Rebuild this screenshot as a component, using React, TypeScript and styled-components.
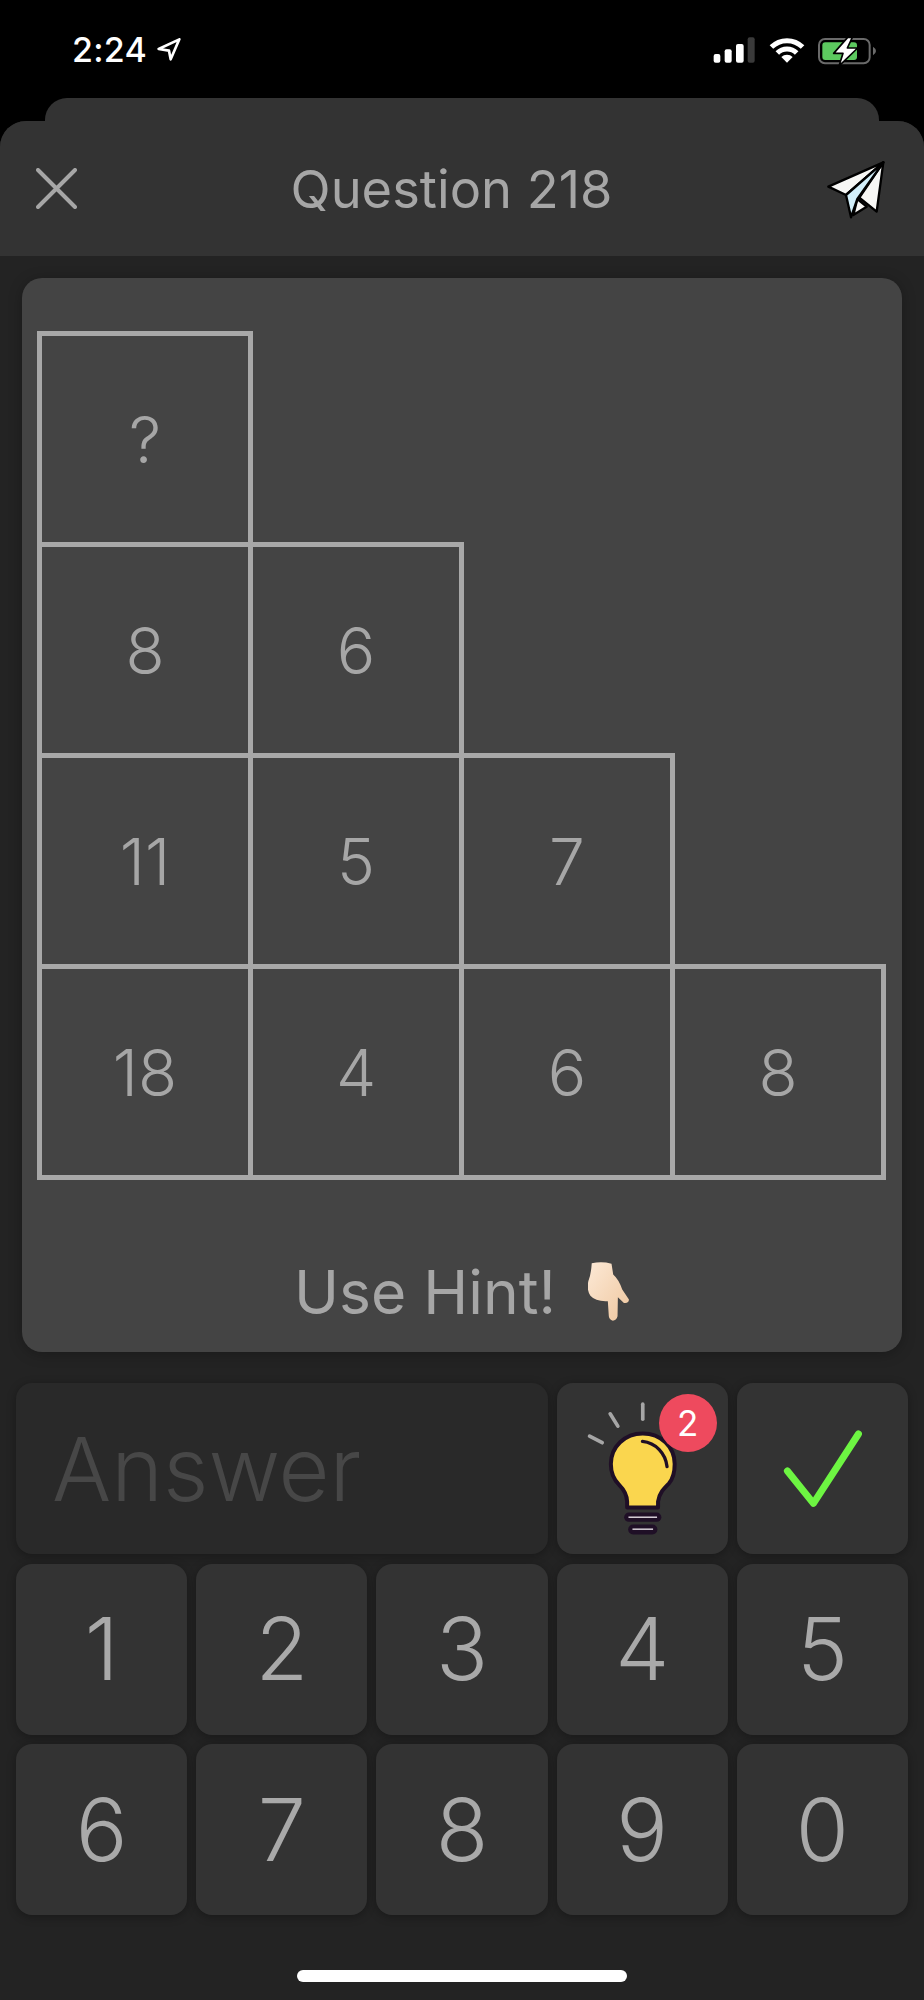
import React from "react";
import styled, { createGlobalStyle } from "styled-components";

const Global = createGlobalStyle`
  html, body { margin: 0; padding: 0; background: #000; }
  * { box-sizing: border-box; }
`;

const Page = styled.div`
  width: 924px;
  height: 2000px;
  background: #000;
  display: flex;
  flex-direction: column;
  font-family: Inter, "Liberation Sans", sans-serif;
  overflow: hidden;
`;

const StatusBar = styled.div`
  height: 98px;
  padding: 0 47px 0 72px;
  display: flex;
  align-items: flex-start;
  justify-content: space-between;
`;

const StatusLeft = styled.div`
  display: flex;
  align-items: center;
  gap: 10px;
  padding-top: 31px;
`;

const Clock = styled.span`
  color: #fff;
  font-size: 34px;
  line-height: 38px;
  font-weight: 500;
  letter-spacing: 0.3px;
`;

const StatusRight = styled.div`
  display: flex;
  align-items: center;
  gap: 10px;
  padding-top: 35px;
`;

const BackSheet = styled.div`
  height: 23px;
  margin: 0 45px;
  background: #333;
  border-radius: 22px 22px 0 0;
`;

const Sheet = styled.div`
  flex: 1;
  background: #232323;
  border-radius: 26px 26px 0 0;
  overflow: hidden;
  display: flex;
  flex-direction: column;
`;

const Header = styled.header`
  height: 135px;
  flex: none;
  background: #333;
  display: flex;
  align-items: center;
  justify-content: space-between;
  padding: 0 34px 0 36px;
`;

const Title = styled.h1`
  margin: 0 0 0 6px;
  color: #a6a6a6;
  font-size: 52.4px;
  font-weight: 400;
  line-height: 60px;
`;

const Card = styled.section`
  height: 1074px;
  margin: 22px 22px 0;
  padding: 53px 0 29px 15px;
  background: #444;
  border-radius: 20px;
  box-shadow: 0 2px 14px rgba(0, 0, 0, 0.25);
  display: flex;
  flex-direction: column;
`;

const Staircase = styled.div`
  display: flex;
  flex-direction: column;
`;

const StairRow = styled.div`
  display: flex;
  margin-bottom: -5px;
`;

const Cell = styled.div`
  width: 216px;
  height: 216px;
  margin-right: -5px;
  border: 5px solid #a8a8a8;
  display: flex;
  align-items: center;
  justify-content: center;
  color: #a6a6a6;
  font-size: 64px;
  font-weight: 300;
`;

const HintRow = styled.div`
  margin-top: auto;
  margin-left: -15px;
  display: flex;
  align-items: center;
  justify-content: center;
  gap: 32px;
`;

const HintText = styled.span`
  color: #a6a6a6;
  font-size: 60.5px;
  line-height: 62px;
  font-weight: 400;
`;

const Keypad = styled.div`
  display: grid;
  grid-template-columns: repeat(5, 1fr);
  grid-auto-rows: 171px;
  gap: 9.5px 9px;
  margin-top: 31px;
  padding: 0 16px;
`;

const Tile = styled.div`
  position: relative;
  border-radius: 16px;
  background: #333;
  box-shadow: 0 2px 10px rgba(0, 0, 0, 0.3);
  display: flex;
  align-items: center;
  justify-content: center;
`;

const AnswerField = styled(Tile)`
  grid-column: span 3;
  background: #292929;
  justify-content: flex-start;
  padding: 0 0 0 36px;
  color: #474747;
  font-size: 88px;
  font-weight: 300;
`;

const Key = styled(Tile)`
  color: #a9a9a9;
  font-size: 86px;
  font-weight: 300;
`;

const TileIcon = styled.svg`
  width: 100%;
  height: 100%;
  display: block;
`;

const Badge = styled.span`
  position: absolute;
  top: 11px;
  right: 11px;
  width: 58px;
  height: 58px;
  border-radius: 50%;
  background: #ee4a5e;
  color: #fff;
  font-size: 35px;
  font-weight: 400;
  display: flex;
  align-items: center;
  justify-content: center;
`;

const HomeWrap = styled.div`
  display: flex;
  justify-content: center;
  margin-top: 55px;
`;

const HomeBar = styled.div`
  width: 330px;
  height: 12px;
  border-radius: 6px;
  background: #fff;
`;

const PlaneIcon = styled.svg`
  display: block;
  margin-top: 3px;
`;

const Location = () => (
  <svg width="24" height="24" viewBox="295 42 72 72">
    <path d="M362 46 L300 75 L331 80 L336 106 Z" fill="none" stroke="#fff" strokeWidth="8" strokeLinejoin="round" />
  </svg>
);

const Signal = () => (
  <svg width="45" height="30" viewBox="30 15 135 90">
    <rect x="35" y="72" width="20" height="26" rx="6" fill="#fff" />
    <rect x="68" y="58" width="21" height="40" rx="6" fill="#fff" />
    <rect x="102" y="42" width="23" height="56" rx="6" fill="#fff" />
    <rect x="137" y="22" width="21" height="76" rx="6" fill="#3a3a3a" />
  </svg>
);

const Wifi = () => (
  <svg width="40" height="30" viewBox="195 15 120 90">
    <path d="M208.3 51.3 A66 66 0 0 1 301.7 51.3" fill="none" stroke="#fff" strokeWidth="15" />
    <path d="M226 69 A41 41 0 0 1 284 69" fill="none" stroke="#fff" strokeWidth="15" />
    <path d="M255 98 L238 81 A24 24 0 0 1 272 81 Z" fill="#fff" />
  </svg>
);

const Battery = () => (
  <svg width="60" height="30" viewBox="350 15 180 90">
    <rect x="356" y="27" width="152" height="73" rx="18" fill="none" stroke="#6a6a6a" strokeWidth="6" />
    <rect x="366" y="37" width="104" height="53" rx="9" fill="#5cc95f" />
    <path d="M518 50 Q527 56 527 63 Q527 70 518 76 Z" fill="#6a6a6a" />
    <path d="M442 22 L400 70 L428 70 L416 108 L472 54 L441 54 L456 22 Z" fill="#fff" stroke="#000" strokeWidth="5" strokeLinejoin="round" />
  </svg>
);

const Close = () => (
  <svg width="41" height="41" viewBox="0 0 41 41">
    <path d="M2 2 L39 39 M39 2 L2 39" stroke="#a6a6a6" strokeWidth="4" strokeLinecap="round" />
  </svg>
);

const Plane = () => (
  <PlaneIcon width="70" height="70" viewBox="0 0 210 210">
    <g stroke="#000" strokeWidth="7" strokeLinejoin="round" strokeLinecap="round">
      <path d="M190 22 L25 95 L78 120 Z" fill="#f7f7f5" />
      <path d="M190 22 L170 170 L118 128 Z" fill="#f7f7f5" />
      <path d="M100 180 L112 132 L140 155 Z" fill="#f7f7f5" />
      <path d="M190 22 L78 120 L93 187 L112 132 Z" fill="#d2effa" />
    </g>
  </PlaneIcon>
);

const Hand = () => (
  <svg width="42" height="62" viewBox="45 30 125 185">
    <defs>
      <linearGradient id="skin" x1="0" y1="0" x2="1" y2="1">
        <stop offset="0" stopColor="#fce9d6" />
        <stop offset="1" stopColor="#efc79f" />
      </linearGradient>
    </defs>
    <path
      d="M56 37 Q85 30 115 38 L120 70 Q137 85 147 115 L167 145 Q167 157 152 155 L134 138 L133 195 Q129 208 119 208 Q108 205 107 195 L104 150 Q68 152 52 134 Q40 115 46 90 Q54 70 56 37 Z"
      fill="url(#skin)"
    />
  </svg>
);

const Bulb = () => (
  <TileIcon viewBox="108 69 515 513">
    <g stroke="#a6a6a6" strokeWidth="11" strokeLinecap="round">
      <path d="M366 132 L366 177" />
      <path d="M268 161 L291 198" />
      <path d="M206 228 L244 248" />
    </g>
    <path
      d="M319 443 L412 443 L412 425 C415 400 430 385 445 370 C462 350 462 325 462 312 C462 260 420 220 366 220 C312 220 270 260 270 312 C270 340 280 360 295 375 C305 385 318 405 319 425 Z"
      fill="#fad64e"
      stroke="#1f0f26"
      strokeWidth="12"
      strokeLinejoin="round"
    />
    <path d="M365 244 C405 248 435 280 439 320" fill="none" stroke="#1f0f26" strokeWidth="10" strokeLinecap="round" />
    <rect x="310" y="458" width="112" height="28" rx="14" fill="#1f0f26" />
    <path d="M323 472 L409 472" stroke="#efe8ef" strokeWidth="4" />
    <rect x="322" y="494" width="88" height="30" rx="15" fill="#1f0f26" />
    <path d="M335 508 L397 508" stroke="#efe8ef" strokeWidth="4" />
  </TileIcon>
);

const Check = () => (
  <TileIcon viewBox="651 69 513 513">
    <path d="M802 333 L880 430 L1015 222" fill="none" stroke="#6df542" strokeWidth="21" strokeLinecap="round" strokeLinejoin="round" />
  </TileIcon>
);

const rows = [["?"], ["8", "6"], ["11", "5", "7"], ["18", "4", "6", "8"]];
const digits = ["1", "2", "3", "4", "5", "6", "7", "8", "9", "0"];

export default function App() {
  return (
    <Page>
      <Global />
      <StatusBar>
        <StatusLeft>
          <Clock>2:24</Clock>
          <Location />
        </StatusLeft>
        <StatusRight>
          <Signal />
          <Wifi />
          <Battery />
        </StatusRight>
      </StatusBar>
      <BackSheet />
      <Sheet>
        <Header>
          <Close />
          <Title>Question 218</Title>
          <Plane />
        </Header>
        <Card>
          <Staircase>
            {rows.map((row, r) => (
              <StairRow key={r}>
                {row.map((v, c) => (
                  <Cell key={c}>{v}</Cell>
                ))}
              </StairRow>
            ))}
          </Staircase>
          <HintRow>
            <HintText>Use Hint!</HintText>
            <Hand />
          </HintRow>
        </Card>
        <Keypad>
          <AnswerField>Answer</AnswerField>
          <Tile>
            <Bulb />
            <Badge>2</Badge>
          </Tile>
          <Tile>
            <Check />
          </Tile>
          {digits.map((d) => (
            <Key key={d}>{d}</Key>
          ))}
        </Keypad>
        <HomeWrap>
          <HomeBar />
        </HomeWrap>
      </Sheet>
    </Page>
  );
}
